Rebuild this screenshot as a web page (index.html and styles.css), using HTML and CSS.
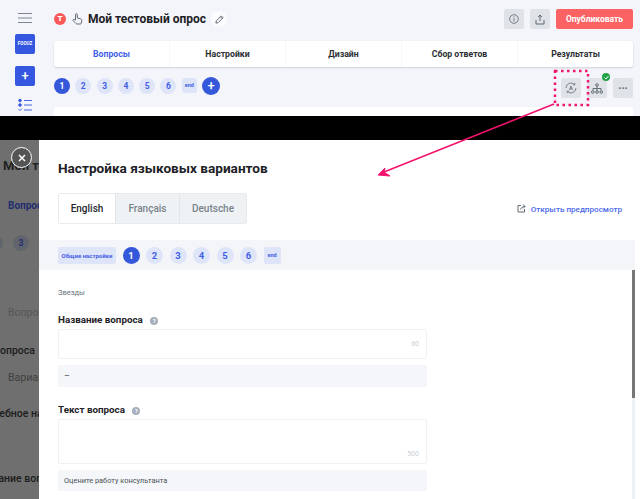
FILE: index.html
```html
<!DOCTYPE html>
<html lang="en">
<head>
  <meta charset="UTF-8">
  <title>Настройка языковых вариантов</title>
  <link rel="stylesheet" href="styles.css">
</head>
<body>

  <section class="shot-top">
    <aside class="side">
      <svg class="burger" width="14" height="10" viewBox="0 0 14 10"><path d="M0 .5h14M0 5h14M0 9.500h14" stroke="#7c8790" fill="none"/></svg>
      <div class="logo">FOOUZ</div>
      <div class="side-plus">+</div>
      <svg width="14" height="14" viewBox="0 0 14 14" fill="none" stroke="#3557e0" stroke-width=".9"><path d="M6 2.500h8M6 7h8M6 12h8"/><circle cx="2" cy="2.500" r="1.300" fill="#3557e0"/><circle cx="2" cy="7" r="1.300" fill="#3557e0"/><path d="M.5 11l1.500 1.500 2-2"/></svg>
    </aside>

    <div class="main">
      <header class="head">
        <span class="t-badge">T</span>
        <svg class="hand" width="11" height="12" viewBox="0 0 11 12" fill="none" stroke="#555e66" stroke-width=".9"><path d="M3.500 7V1.600a.9.900 0 0 1 1.800 0V5l3.300.8c.8.200 1.300.8 1.200 1.600l-.4 2.600c-.1.600-.5 1-1.100 1H5c-.4 0-.8-.2-1-.5L1 7.500c-.4-.6.400-1.400 1-1z"/></svg>
        <h1 class="survey-title">Мой тестовый опрос</h1>
        <span class="pencil"><svg width="9" height="9" viewBox="0 0 10 10" fill="none" stroke="#555e66"><path d="M1 9l.5-2.500L7 1l2 2-5.500 5.500zM6 2l2 2"/></svg></span>
        <div class="head-right">
          <span class="icon-btn"><svg width="10" height="10" viewBox="0 0 10 10" fill="none" stroke="#6a747c" stroke-width=".9"><circle cx="5" cy="5" r="4.300"/><path d="M5 4.200v3.300M5 2.300v1"/></svg></span>
          <span class="icon-btn"><svg width="10" height="11" viewBox="0 0 10 11" fill="none" stroke="#5f6a72"><path d="M5 7V1M3 3l2-2 2 2M1 6v4h8V6"/></svg></span>
          <span class="publish">Опубликовать</span>
        </div>
      </header>

      <nav class="tabs">
        <a class="tab active">Вопросы</a>
        <a class="tab">Настройки</a>
        <a class="tab">Дизайн</a>
        <a class="tab">Сбор ответов</a>
        <a class="tab">Результаты</a>
      </nav>

      <div class="steps-row">
        <div class="steps">
          <span class="num on">1</span>
          <span class="num">2</span>
          <span class="num">3</span>
          <span class="num">4</span>
          <span class="num">5</span>
          <span class="num">6</span>
          <span class="chip">end</span>
          <span class="add">+</span>
        </div>
        <div class="tools">
          <span class="icon-btn">
            <svg width="12" height="12" viewBox="0 0 12 12" fill="none" stroke="#626d75" stroke-width=".8"><path d="M1 6a5 5 0 0 1 8.500-3.500M9.800 .9v1.900H7.900M11 6a5 5 0 0 1-8.500 3.500M2.200 11.100V9.200h1.900M4.500 8L6 4l1.500 4M5 6.900h2"/></svg>
          </span>
          <span class="icon-btn">
            <svg width="12" height="11" viewBox="0 0 12 11" fill="none" stroke="#626d75"><circle cx="6" cy="2" r="1.300"/><circle cx="1.800" cy="9" r="1.300"/><circle cx="6" cy="9" r="1.300"/><circle cx="10.200" cy="9" r="1.300"/><path d="M6 3.300v4.400M2 7.500V5.500h8v2"/></svg>
            <span class="check"><svg width="5" height="5" viewBox="0 0 5 5" fill="none" stroke="#fff"><path d="M.5 2.500l1.500 1.500 2.500-3"/></svg></span>
          </span>
          <span class="icon-btn dots">···</span>
        </div>
      </div>

      <div class="card"></div>
    </div>
  </section>

  <div class="black-bar"></div>

  <section class="shot-bottom">
    <aside class="dimmed">
      <div class="dim-title">Мой тестовый</div>
      <div class="dim-tab">Вопросы</div>
      <div class="dim-steps"><span>2</span><span>3</span></div>
      <div class="dim-sub">Вопросы</div>
      <div class="dim-bold dim-q">вопроса</div>
      <div class="dim-var">Вариант</div>
      <div class="dim-bold dim-learn">Учебное название</div>
      <div class="dim-bold dim-last">Название вопроса</div>
    </aside>
    <span class="close">
      <svg width="8" height="8" viewBox="0 0 8 8" stroke="#fff" stroke-width="1.500"><path d="M1 1l6 6M7 1L1 7"/></svg>
    </span>

    <div class="panel">
      <div class="panel-top">
        <h2 class="panel-title">Настройка языковых вариантов</h2>
        <div class="lang-row">
          <div class="langs">
            <span class="lang current">English</span>
            <span class="lang">Français</span>
            <span class="lang">Deutsche</span>
          </div>
          <a class="preview">
            <svg width="9" height="9" viewBox="0 0 9 9" fill="none" stroke="#5f6a72"><path d="M4 1.500H1v6.500h6.500V5M3.500 5.500C4 3.500 5.500 2.500 8 2.500M6 .5l2 2-2 2"/></svg>
            Открыть предпросмотр
          </a>
        </div>
      </div>

      <div class="band">
        <span class="chip">Общие настройки</span>
        <span class="num on">1</span>
        <span class="num">2</span>
        <span class="num">3</span>
        <span class="num">4</span>
        <span class="num">5</span>
        <span class="num">6</span>
        <span class="chip">end</span>
      </div>

      <div class="form-wrap">
        <form class="form">
          <p class="kind">Звезды</p>

          <label class="q-label">Название вопроса <i class="help">?</i></label>
          <div class="field short"><span class="count">60</span></div>
          <div class="orig short-orig">–</div>

          <label class="q-label second">Текст вопроса <i class="help">?</i></label>
          <div class="field tall"><span class="count">500</span></div>
          <div class="orig">Оцените работу консультанта</div>
        </form>
        <div class="scroll"><div class="thumb"></div></div>
      </div>
    </div>
  </section>

  <!-- annotation drawn over both shots -->
  <svg class="marks" width="640" height="499" viewBox="0 0 640 499" fill="none">
    <rect x="555" y="71" width="33" height="34" stroke="#f2146f" stroke-width="2.500" stroke-dasharray="2.500 3.500"/>
    <path d="M554 104L384 172" stroke="#f2146f" stroke-width="1.800"/>
    <path d="M378 175L385 168L384 172L390 176z" fill="#f2146f" stroke="#f2146f"/>
  </svg>

</body>
</html>
```

FILE: styles.css
```css
* {
  box-sizing: border-box;
}
html, body {
  margin: 0;
  height: 499px;
  overflow: hidden;
}
body {
  position: relative;
  font-family: Roboto, "Liberation Sans", sans-serif;
  background-color: #f3f5fa;
  color: #1d2126;
}

/* top screenshot */
.shot-top {
  display: flex;
  height: 116px;
  overflow: hidden;
}
.side {
  width: 50px;
  flex: none;
  display: flex;
  flex-direction: column;
  align-items: center;
  padding-top: 13px;
}
.logo {
  width: 20px;
  height: 20px;
  margin-top: 11px;
  border-radius: 2px;
  background-color: #3557e0;
  color: #fff;
  font-size: 4.500px;
  font-weight: 700;
  line-height: 20px;
  text-align: center;
}
.side-plus {
  width: 20px;
  height: 20px;
  margin: 12px 0;
  border-radius: 2px;
  background-color: #3557e0;
  color: #fff;
  font-size: 13px;
  font-weight: 500;
  line-height: 19px;
  text-align: center;
}
.main {
  flex: 1;
  padding: 0 7px 0 4px;
}
.head {
  display: flex;
  align-items: center;
  height: 41px;
  padding-bottom: 3px;
}
.t-badge {
  width: 12px;
  height: 12px;
  border-radius: 50%;
  background-color: #fb5a5a;
  color: #fff;
  font-size: 8px;
  font-weight: 900;
  line-height: 12px;
  text-align: center;
}
.hand {
  margin-left: 6px;
}
.survey-title {
  margin: 0 0 0 5px;
  font-size: 12px;
  font-weight: 700;
}
.pencil {
  display: flex;
  align-items: center;
  justify-content: center;
  width: 16px;
  height: 16px;
  margin-left: 5px;
  border-radius: 50%;
  background-color: #fbfcfe;
}
.head-right {
  margin-left: auto;
  display: flex;
  gap: 6px;
}
.icon-btn {
  position: relative;
  width: 20px;
  height: 20px;
  border-radius: 2px;
  background-color: #dfe3e8;
  display: flex;
  align-items: center;
  justify-content: center;
}
.publish {
  width: 77px;
  height: 20px;
  border-radius: 2px;
  background-color: #fb6264;
  color: #fff;
  font-size: 8.500px;
  font-weight: 700;
  line-height: 20px;
  text-align: center;
}
.tabs {
  display: flex;
  height: 26px;
  border-radius: 3px;
  background-color: #fff;
  box-shadow: 0 1px 2px rgba(60, 70, 90, 0.2);
}
.tab {
  flex: 1;
  font-size: 8.700px;
  font-weight: 700;
  line-height: 26px;
  text-align: center;
  border-left: 1px solid #f6f7fa;
  color: #2a2e33;
}
.tab.active {
  color: #3f60e6;
  border-left: 0;
}
.steps-row {
  display: flex;
  justify-content: space-between;
  height: 40px;
  padding-top: 11px;
}
.steps {
  display: flex;
  align-items: flex-start;
  gap: 5.300px;
}
.num {
  width: 16px;
  height: 16px;
  flex: none;
  border-radius: 50%;
  background-color: #dfe5f8;
  color: #3f60e6;
  font-size: 8.500px;
  font-weight: 700;
  line-height: 16px;
  text-align: center;
}
.num.on {
  background-color: #3557d9;
  color: #fff;
}
.chip {
  height: 15px;
  min-width: 15px;
  padding: 0 2px;
  border-radius: 2px;
  background-color: #dfe5f8;
  color: #3f60e6;
  font-size: 5.500px;
  font-weight: 700;
  line-height: 15px;
  text-align: center;
}
.add {
  width: 18px;
  height: 18px;
  margin-top: -1px;
  border-radius: 50%;
  background-color: #3557d9;
  color: #fff;
  font-size: 13px;
  font-weight: 500;
  line-height: 17px;
  text-align: center;
}
.tools {
  display: flex;
  gap: 6px;
}
.check {
  position: absolute;
  top: -5px;
  right: -3px;
  width: 8px;
  height: 8px;
  border-radius: 50%;
  background-color: #1fa347;
  display: flex;
  align-items: center;
  justify-content: center;
}
.dots {
  color: #626d75;
  font-size: 10px;
  font-weight: 900;
}
.card {
  height: 40px;
  border-radius: 3px;
  background-color: #fff;
}

.black-bar {
  height: 24px;
  background-color: #000;
}

/* bottom screenshot */
.shot-bottom {
  position: relative;
  display: flex;
  height: 359px;
  overflow: hidden;
}
.dimmed {
  width: 39px;
  flex: none;
  overflow: hidden;
  background-color: #6f6f6f;
  color: #2f2f2f;
  font-size: 10.500px;
  white-space: nowrap;
}
.dim-title {
  margin: 18px 0 0 3px;
  font-size: 13px;
  font-weight: 700;
  color: #222;
  line-height: 16px;
}
.dim-tab {
  margin: 26px 0 0 8px;
  color: #1f2d6e;
  font-size: 10px;
  font-weight: 700;
  line-height: 12px;
}
.dim-steps {
  display: flex;
  gap: 10px;
  margin-top: 23px;
}
.dim-steps span {
  width: 16px;
  height: 16px;
  flex: none;
  border-radius: 50%;
  background-color: #62646d;
  color: #1f2d6e;
  font-size: 8.500px;
  font-weight: 700;
  line-height: 16px;
  text-align: center;
}
.dim-steps span:first-child {
  margin-left: -13px;
}
.dim-sub {
  margin: 56px 0 0 8px;
  color: #565656;
  line-height: 12px;
}
.dim-bold {
  font-weight: 500;
  color: #1c1c1c;
  line-height: 12px;
}
.dim-q {
  margin: 26px 0 0 -6px;
}
.dim-var {
  margin: 15px 0 0 8px;
  color: #3f3f3f;
  line-height: 12px;
}
.dim-learn {
  margin: 24px 0 0 -13px;
}
.dim-last {
  margin: 53px 0 0 -26px;
}
.close {
  position: absolute;
  top: 7px;
  left: 11px;
  width: 21px;
  height: 21px;
  border: 1.500px solid #fff;
  border-radius: 50%;
  background-color: #555;
  display: flex;
  align-items: center;
  justify-content: center;
}
.panel {
  flex: 1;
  min-width: 0;
  background-color: #fff;
  display: flex;
  flex-direction: column;
}
.panel-top {
  height: 100px;
  padding: 19px 18px 0 19px;
}
.panel-title {
  margin: 0;
  font-size: 13.600px;
  font-weight: 700;
  line-height: 18px;
}
.lang-row {
  display: flex;
  justify-content: space-between;
  align-items: center;
  margin-top: 16px;
}
.langs {
  display: flex;
  height: 31px;
  border: 1px solid #e8ebee;
  border-radius: 2px;
}
.lang {
  width: 64px;
  background-color: #eff2f4;
  border-left: 1px solid #e3e6e9;
  color: #7a838c;
  font-size: 10px;
  font-weight: 500;
  line-height: 29px;
  text-align: center;
}
.lang:last-child {
  width: 67px;
}
.lang.current {
  width: 56px;
  background-color: #fff;
  border-left: 0;
  color: #24282c;
}
.preview {
  display: flex;
  align-items: center;
  gap: 5px;
  color: #4a69ea;
  font-size: 8.100px;
  font-weight: 500;
}
.band {
  display: flex;
  align-items: center;
  gap: 6.500px;
  height: 30px;
  margin-right: 5px;
  padding-left: 19px;
  background-color: #f3f5f9;
}
.band .num {
  width: 17px;
  height: 17px;
  line-height: 17px;
  font-size: 9.500px;
}
.band .chip {
  height: 17px;
  line-height: 17px;
}
.band .chip:first-child {
  width: 58px;
  padding: 0;
  font-size: 6px;
  white-space: nowrap;
}
.band .chip:last-child {
  width: 17px;
}
.form-wrap {
  flex: 1;
  display: flex;
  justify-content: space-between;
}
.form {
  width: 369px;
  margin-left: 19px;
}
.kind {
  margin: 18px 0 0;
  color: #6d767e;
  font-size: 7.500px;
  line-height: 10px;
}
.q-label {
  display: block;
  margin-top: 15px;
  font-size: 9.800px;
  font-weight: 700;
  line-height: 14px;
  color: #1f2327;
}
.q-label.second {
  margin-top: 16px;
}
.help {
  display: inline-block;
  width: 8px;
  height: 8px;
  margin-left: 5px;
  border-radius: 50%;
  background-color: #a5afbc;
  color: #fff;
  font-size: 6px;
  font-style: normal;
  line-height: 8px;
  text-align: center;
  vertical-align: 0;
}
.field {
  display: flex;
  justify-content: flex-end;
  align-items: center;
  margin-top: 2px;
  padding-right: 7px;
  border: 1.500px solid #eef0f2;
  border-radius: 2px;
}
.field.short {
  height: 30px;
}
.field.tall {
  height: 45px;
  align-items: flex-end;
  padding-bottom: 5px;
}
.count {
  color: #cbd0d5;
  font-size: 7px;
}
.orig {
  height: 21px;
  margin-top: 6px;
  padding-left: 6px;
  border-radius: 2px;
  background-color: #f5f6f9;
  color: #4a5157;
  font-size: 7.400px;
  line-height: 21px;
}
.orig.short-orig {
  height: 22px;
  line-height: 22px;
  font-size: 9px;
}
.scroll {
  width: 3px;
  margin-right: 5px;
  background-color: #eef1f3;
}
.thumb {
  height: 128px;
  background-color: #777;
}

/* pink annotation */
.marks {
  position: absolute;
  top: 0;
  left: 0;
  pointer-events: none;
}
```
